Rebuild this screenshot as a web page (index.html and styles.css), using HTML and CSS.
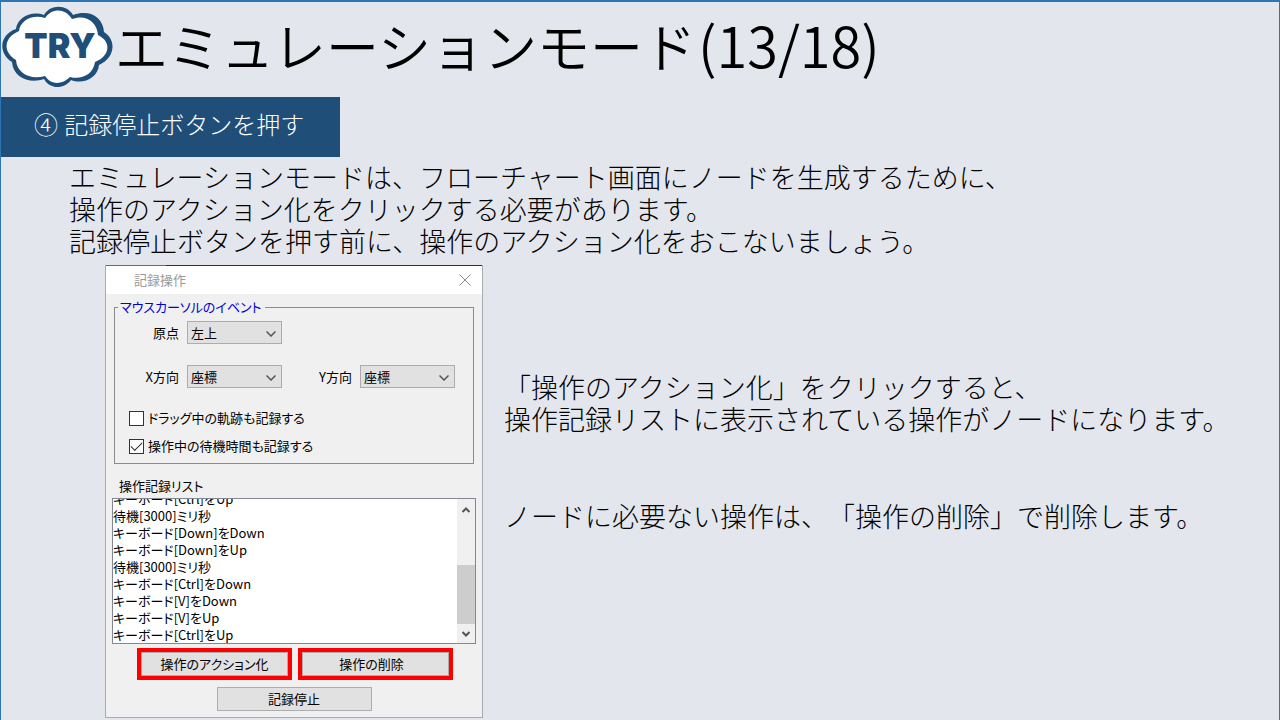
FILE: index.html
```html
<!DOCTYPE html>
<html lang="ja">
  <head>
    <meta charset="UTF-8" />
    <meta name="viewport" content="width=device-width, initial-scale=1.0" />
    <title>エミュレーションモード</title>
    <link rel="stylesheet" href="styles.css">
  </head>
  <body>
    <div class="slide">
      <header class="header">
        <svg class="logo" viewBox="2 1 114 88" role="img" aria-label="TRY">
          <path class="cloud-line" d="M17 28C18 17 32 9 45 14C51 3 68 3 74 14C91 8 104 16 105 31C118 39 116 57 100 64C99 77 84 84 72 79C65 89 50 88 45 78C31 83 14 77 13 61C-1 52 0 34 17 28Z" />
          <path class="cloud" d="M20 30C21 20 33 13 46 17C53 7 66 7 73 18C86 13 98 20 99 34C113 41 111 55 96 61C94 74 82 79 71 76C63 84 52 84 46 75C32 79 18 73 17 59C4 51 4 37 20 30Z" />
          <text class="logo-text" x="61" y="57" text-anchor="middle">TRY</text>
        </svg>
        <h1 class="title">エミュレーションモード<span class="page">(13/18)</span></h1>
      </header>
      <h2 class="step">④ 記録停止ボタンを押す</h2>
      <main class="content">
        <p class="text">
          エミュレーションモードは、フローチャート画面にノードを生成するために、<br>
          操作のアクション化をクリックする必要があります。<br>
          記録停止ボタンを押す前に、操作のアクション化をおこないましょう。
        </p>
        <div class="row">
          <form class="dialog">
            <div class="bar">
              <span>記録操作</span>
              <button type="button" class="close" aria-label="閉じる">
                <svg width="12" height="12" viewBox="0 0 12 12"><path d="M0.5 0.5L11.5 11.5M11.5 0.5L0.5 11.5" /></svg>
              </button>
            </div>
            <div class="inner">
              <fieldset class="group">
                <legend>マウスカーソルのイベント</legend>
                <div class="fields">
                  <label for="origin">原点</label>
                  <span class="drop wide">
                    <select id="origin"><option>左上</option></select>
                    <svg width="10" height="6" viewBox="0 0 10 6"><path d="M0.5 0.5L5 5L9.5 0.5" /></svg>
                  </span>
                  <label for="dirx">X方向</label>
                  <span class="drop">
                    <select id="dirx"><option>座標</option></select>
                    <svg width="10" height="6" viewBox="0 0 10 6"><path d="M0.5 0.5L5 5L9.5 0.5" /></svg>
                  </span>
                  <label for="diry">Y方向</label>
                  <span class="drop">
                    <select id="diry"><option>座標</option></select>
                    <svg width="10" height="6" viewBox="0 0 10 6"><path d="M0.5 0.5L5 5L9.5 0.5" /></svg>
                  </span>
                </div>
                <div class="checks">
                  <label><input type="checkbox">ドラッグ中の軌跡も記録する</label>
                  <label><input type="checkbox" checked>操作中の待機時間も記録する</label>
                </div>
              </fieldset>
              <p class="caption">操作記録リスト</p>
              <div class="listbox">
                <ul class="list">
                  <li>キーボード[Ctrl]をUp</li>
                  <li>待機[3000]ミリ秒</li>
                  <li>キーボード[Down]をDown</li>
                  <li>キーボード[Down]をUp</li>
                  <li>待機[3000]ミリ秒</li>
                  <li>キーボード[Ctrl]をDown</li>
                  <li>キーボード[V]をDown</li>
                  <li>キーボード[V]をUp</li>
                  <li>キーボード[Ctrl]をUp</li>
                </ul>
                <div class="scroll">
                  <svg width="8" height="6" viewBox="0 0 8 6"><path d="M0.5 5L4 1.5L7.5 5" /></svg>
                  <div class="thumb"></div>
                  <svg width="8" height="6" viewBox="0 0 8 6"><path d="M0.5 1L4 4.5L7.5 1" /></svg>
                </div>
              </div>
              <div class="buttons">
                <span class="mark"><button type="button" class="btn">操作のアクション化</button></span>
                <span class="mark"><button type="button" class="btn delete">操作の削除</button></span>
              </div>
              <button type="button" class="btn stop">記録停止</button>
            </div>
          </form>
          <div class="notes">
            <p class="text">
              「操作のアクション化」をクリックすると、<br>
              操作記録リストに表示されている操作がノードになります。
            </p>
            <p class="text">ノードに必要ない操作は、「操作の削除」で削除します。</p>
          </div>
        </div>
      </main>
    </div>
  </body>
</html>
```
FILE: styles.css
```css
* {
  padding: 0;
  margin: 0;
  box-sizing: border-box;
}
body {
  background-color: #e3e6ed;
  font-family: "Noto Sans CJK JP", sans-serif;
  font-weight: 300;
  color: #000;
}
ul {
  list-style: none;
}
.slide {
  min-height: 100vh;
  border: 1px solid #2e75b6;
  border-top-width: 2px;
  border-bottom: 0;
}
.header {
  display: flex;
  align-items: center;
  height: 95px;
  padding-bottom: 8px;
}
.logo {
  flex: none;
  width: 114px;
  height: 88px;
}
.cloud-line {
  fill: #1f4e79;
}
.cloud {
  fill: #fff;
}
.logo-text {
  font-family: Inter, sans-serif;
  font-size: 34px;
  font-weight: 900;
  fill: #1f4e79;
}
.title {
  font-family: "Noto Sans", "Noto Sans CJK JP", sans-serif;
  font-size: 53px;
  font-weight: 350;
  line-height: 80px;
}
.page {
  padding-left: 2px;
  font-family: "Noto Sans CJK JP", sans-serif;
  font-size: 56px;
}
/* 手順の見出し */
.step {
  width: 339px;
  padding-left: 33px;
  background-color: #1f4e79;
  color: #fff;
  font-family: "Noto Sans", "Noto Sans CJK JP", sans-serif;
  font-size: 24px;
  font-weight: 300;
  line-height: 56px;
  padding-bottom: 4px;
}
.content {
  padding-top: 4px;
}
.text {
  font-size: 27px;
  line-height: 32px;
  text-spacing-trim: space-all;
}
.content > .text {
  padding-left: 68px;
}
.row {
  display: flex;
  margin-top: 8px;
  padding-left: 104px;
}
.notes {
  display: flex;
  flex-direction: column;
  gap: 65px;
  padding: 106px 0 0 21px;
}

/* 記録操作ダイアログ */
.dialog {
  flex: none;
  width: 378px;
  border: 1px solid #a9abb3;
  border-top: 0;
  background-color: #f0f0f0;
  font-size: 13px;
  font-weight: 400;
  font-feature-settings: "palt";
}
.bar {
  display: flex;
  justify-content: space-between;
  align-items: center;
  height: 29px;
  padding: 0 11px 0 28px;
  background: linear-gradient(to right, #2f8f4f 60px, #26304a 60px) no-repeat top / 100% 1px #fff;
  color: #999;
}
.close {
  display: flex;
  border: 0;
  background: none;
}
.dialog svg {
  fill: none;
  stroke: #555;
}
.drop path {
  stroke-width: 1.5;
}
.dialog .close svg {
  stroke: #888;
}
.inner {
  padding: 4px 6px 6px;
}
.group {
  margin: 0 2px;
  border: 1px solid #8c8c8c;
  padding: 5px 0 7px;
}
.group legend {
  margin-left: 3px;
  padding: 0 3px 0 2px;
  color: #0000d8;
  line-height: 18px;
}
.fields {
  display: grid;
  grid-template-columns: 49px 95px 62px 95px;
  column-gap: 8px;
  row-gap: 21px;
  align-items: center;
  padding-left: 15px;
}
.fields label {
  text-align: right;
}
.wide {
  grid-column: 2 / -1;
}
.drop {
  position: relative;
  width: 95px;
}
.drop select {
  display: block;
  appearance: none;
  width: 100%;
  height: 23px;
  padding-left: 3px;
  border: 1px solid #acacac;
  border-radius: 0;
  background-color: #e1e1e1;
  color: #000;
  font: inherit;
  font-feature-settings: inherit;
}
.drop svg {
  position: absolute;
  top: 10px;
  right: 6px;
  pointer-events: none;
}
.checks {
  display: flex;
  flex-direction: column;
  gap: 8px;
  margin-top: 20px;
  padding-left: 14px;
}
.checks label {
  display: flex;
  align-items: center;
  gap: 4px;
  line-height: 20px;
}
.checks input {
  appearance: none;
  display: grid;
  place-items: center;
  width: 15px;
  height: 15px;
  border: 1px solid #333;
  background-color: #fff;
}
.checks input:checked::before {
  content: "";
  width: 10px;
  height: 5px;
  margin-bottom: 3px;
  border: solid #333;
  border-width: 0 0 1px 1px;
  transform: rotate(-45deg);
}
.caption {
  padding: 12px 0 2px 7px;
  line-height: 20px;
}
.listbox {
  display: flex;
  height: 146px;
  border: 1px solid #828790;
  background-color: #fff;
}
/* 一番下までスクロールした状態 */
.list {
  flex: 1;
  display: flex;
  flex-direction: column;
  justify-content: flex-end;
  overflow: hidden;
}
.list li {
  flex: none;
  height: 17px;
  line-height: 17px;
}
.scroll {
  display: flex;
  flex-direction: column;
  align-items: center;
  width: 18px;
  padding: 8px 0 6px;
  background-color: #f0f0f0;
}
.scroll path {
  stroke-width: 2;
}
.thumb {
  width: 100%;
  height: 59px;
  margin: auto 0 7px;
  background-color: #cdcdcd;
}
.buttons {
  display: flex;
  justify-content: center;
  gap: 6px;
  margin: 4px 0 7px;
  padding-left: 2px;
}
.mark {
  width: 155px;
  border: 4px solid #f00;
}
.btn {
  display: block;
  width: 100%;
  height: 24px;
  border: 1px solid #adadad;
  background-color: #e1e1e1;
  color: #000;
  font: inherit;
  font-feature-settings: inherit;
  line-height: 20px;
}
.delete {
  padding-right: 8px;
}
.stop {
  width: 155px;
  margin: 0 auto;
}
```
